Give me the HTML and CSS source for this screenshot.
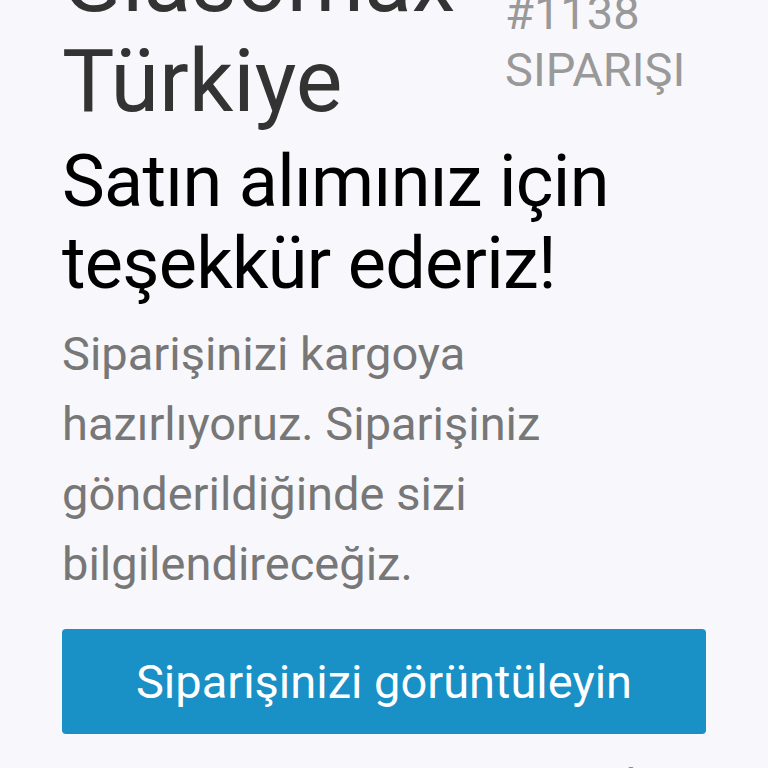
FILE: index.html
```html
<!DOCTYPE html>
<html lang="tr">
<head>
<meta charset="utf-8">
<title>Sipariş</title>
<link rel="stylesheet" href="styles.css">
</head>
<body>
<div class="page">
  <header class="header">
    <h1 class="shop">Glasomax Türkiye</h1>
    <div class="order">#1138<br>SIPARIŞI</div>
  </header>
  <h2 class="title">Satın alımınız için teşekkür ederiz!</h2>
  <p class="lead">Siparişinizi kargoya hazırlıyoruz. Siparişiniz gönderildiğinde sizi bilgilendireceğiz.</p>
  <a class="btn" href="#">Siparişinizi görüntüleyin</a>
  <p class="alt"><span class="alt-or">veya</span> <a class="alt-link" href="#">Mağazamızı ziyaret edin</a></p>
</div>
</body>
</html>
```
FILE: styles.css
```css
html, body {
  margin: 0;
  padding: 0;
  background: #f8f8fc;
  overflow: hidden;
}
body {
  font-family: Roboto, "Noto Sans", sans-serif;
}
.page {
  padding: 0 62px;
}
.header {
  display: flex;
  margin-top: -69px;
}
.shop {
  margin: 0;
  width: 443px;
  flex: none;
  font-size: 88px;
  line-height: 100px;
  font-weight: 400;
  color: #333333;
}
.order {
  padding-top: 53px;
  font-size: 47px;
  line-height: 57px;
  color: #999999;
}
.title {
  margin: 10px 0 0;
  font-size: 72px;
  line-height: 82px;
  font-weight: 400;
  letter-spacing: -0.7px;
  color: #000000;
}
.lead {
  margin: 14px 0 0;
  font-size: 47px;
  line-height: 70px;
  color: #777777;
}
.btn {
  display: block;
  margin-top: 30px;
  height: 105px;
  line-height: 105px;
  background: #1990c6;
  border-radius: 4px;
  color: #ffffff;
  text-align: center;
  font-size: 47px;
  text-decoration: none;
}
.alt {
  margin: 17px 0 0;
  font-size: 47px;
  line-height: 70px;
  text-align: left;
  color: #777777;
}
.alt-link {
  color: #1990c6;
  text-decoration: none;
}
```
